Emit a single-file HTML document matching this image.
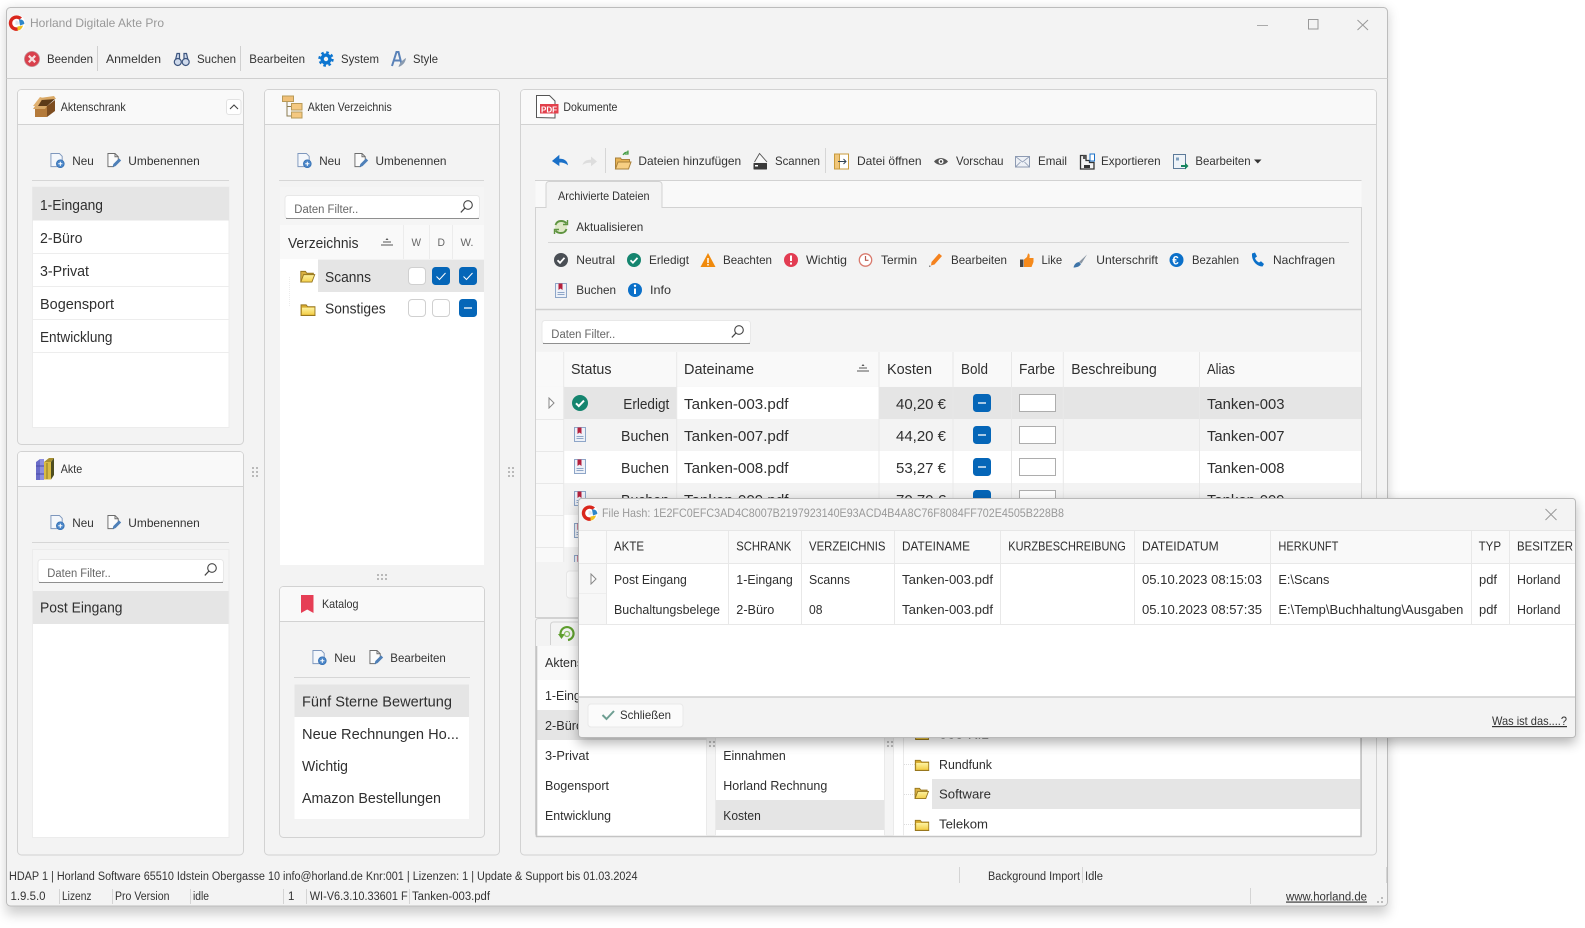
<!DOCTYPE html>
<html lang="de"><head><meta charset="utf-8"><title>Horland Digitale Akte Pro</title>
<style>
html,body{margin:0;padding:0;background:#fff;width:1585px;height:928px;overflow:hidden}
svg{display:block}
text{font-family:"Liberation Sans",sans-serif;font-size:12px;fill:#333;white-space:pre}
.b{font-size:15px;fill:#2f2f2f}
.m{font-size:12.5px;fill:#2f2f2f}
.g{fill:#999}
.f{fill:#666;font-size:11.5px}
.s{font-size:11.5px;fill:#333}
.l{fill:#e5e5e5}
.h{fill:#f9f9f9}
</style></head><body>
<svg xmlns="http://www.w3.org/2000/svg" width="1585" height="928" viewBox="0 0 1585 928" shape-rendering="geometricPrecision">
<defs>
<filter id="sh" x="-5%" y="-5%" width="110%" height="115%"><feGaussianBlur stdDeviation="6"/></filter>
<linearGradient id="fy" x1="0" y1="0" x2="0" y2="1"><stop offset="0" stop-color="#fdf2a0"/><stop offset="1" stop-color="#f3cf4a"/></linearGradient>
<symbol id="new" viewBox="0 0 16 16" overflow="visible"><path d="M1 .5h9l3 3v6H10v5H1z" fill="#f4f7fb" stroke="#7e97bd"/><circle cx="11" cy="11.500" r="4.200" fill="#4b86c8" stroke="#2b68ad" stroke-width=".7"/><path d="M8.800 11.500h4.400M11 9.300v4.400" stroke="#fff" stroke-width="1.100"/></symbol>
<symbol id="ren" viewBox="0 0 16 16" overflow="visible"><path d="M1 .5h7.500l3.500 3.500v4L7 14.500H1z" fill="#fbfbfb" stroke="#6c6c6c"/><path d="M8.500.5v3.500H12" fill="none" stroke="#6c6c6c"/><path d="M5.800 15l1-3.300 6-6 2.300 2.300-6 6z" fill="#4f80b8"/></symbol>
<symbol id="ce" viewBox="0 0 18 18"><rect x=".5" y=".5" width="17" height="17" rx="3.500" fill="#fff" stroke="#d0d0d0"/></symbol>
<symbol id="cd" viewBox="0 0 18 18"><rect width="18" height="18" rx="3.500" fill="#0566b8"/><path d="M4.500 9.500l3 3 6-6.500" fill="none" stroke="#fff" stroke-width="1"/></symbol>
<symbol id="cm" viewBox="0 0 18 18"><rect width="18" height="18" rx="3.500" fill="#0566b8"/><path d="M5 9h8" stroke="#fff" stroke-width="1.300"/></symbol>
<symbol id="fo" viewBox="0 0 16 14"><path d="M.5 13.500V2h5.500l1.500 2h8v9.500z" fill="#d8ab2e" stroke="#96761e"/><path d="M1.500 5h13.500v7.500H1.500z" fill="url(#fy)"/><path d="M.5 13.500h15.500" stroke="#96761e"/></symbol>
<symbol id="fp" viewBox="0 0 16 14"><path d="M.5 13V1.500h5l1.500 2h7v2" fill="#d9b040" stroke="#96761e"/><path d="M.5 13l3-8h12l-3 8z" fill="url(#fy)" stroke="#96761e"/></symbol>
<symbol id="bk" viewBox="0 0 12 15"><rect x=".5" y=".5" width="11" height="14" fill="#edf1f8" stroke="#8ea6c8"/><path d="M3.500.5h4v6.500l-2-1.500-2 1.500z" fill="#b5203c"/><path d="M2.500 9.500h7M2.500 11.500h7" stroke="#8ea6c8"/></symbol>
<symbol id="ok" viewBox="0 0 16 16"><circle cx="8" cy="8" r="8" fill="#15856f"/><path d="M4 8.300l2.800 2.800 5.200-5.500" fill="none" stroke="#fff" stroke-width="2"/></symbol>
<symbol id="sr" viewBox="0 0 13 13"><circle cx="8" cy="5" r="4.300" fill="none" stroke="#444" stroke-width="1.100"/><path d="M4.800 8.200L.8 12.400" stroke="#444" stroke-width="1.200"/></symbol>
<symbol id="so" viewBox="0 0 12 9"><path d="M4.500 3L6 1l1.500 2z" fill="#555"/><path d="M2 5h8M0 8h12" stroke="#555"/></symbol>
<symbol id="ar" viewBox="0 0 7 12"><path d="M1 1l5 5-5 5z" fill="#fff" stroke="#888"/></symbol>
<symbol id="logo" viewBox="0 0 16 16" overflow="visible"><circle cx="8.500" cy="8" r="8" fill="#fff"/><path d="M13.500 2.500A7.800 7.800 0 1 0 9.500 15.800L8.800 12.300A4.300 4.300 0 1 1 10.800 4.800z" fill="#d9261c"/><path d="M7 5.500c3 0 4 2 3 4L7 10z" fill="#dfe7ef"/><path d="M10.500 4.500c3-.5 5.500 1.500 5.300 4.500l-4.300 1.500z" fill="#2d86c9"/><path d="M9 11.500l5.500-1c-.5 2.500-2.700 5-5.500 5z" fill="#f0c220"/></symbol>
</defs>

<rect x="6.500" y="10" width="1381" height="904" fill="#000" opacity=".2" filter="url(#sh)"/>
<rect x="6.500" y="7.500" width="1381" height="898.500" rx="4" fill="#f3f3f3" stroke="#bcbcbc"/>

<!-- title bar -->
<use href="#logo" x="8.500" y="15" width="16" height="16"/>
<text x="30" y="27" class="g" textLength="134" lengthAdjust="spacingAndGlyphs">Horland Digitale Akte Pro</text>
<path d="M1257 25.500h11" stroke="#aaa"/><rect x="1308.500" y="19.500" width="9.500" height="9.500" fill="none" stroke="#999"/><path d="M1357.500 20l10.500 10M1368 20l-10.500 10" stroke="#999"/>

<!-- menu -->
<circle cx="32" cy="59" r="7.600" fill="#d9404c" stroke="#c49a9f" stroke-width=".8"/><path d="M28.800 55.800l6.400 6.400M35.200 55.800l-6.400 6.400" stroke="#f6dede" stroke-width="2.200"/>
<text x="47" y="63" textLength="46" lengthAdjust="spacingAndGlyphs">Beenden</text>
<path d="M97.500 46v25M240.500 46v25" stroke="#d0d0d0"/>
<text x="106" y="63" textLength="55" lengthAdjust="spacingAndGlyphs">Anmelden</text>
<g fill="#cfdaec" stroke="#3e567f" stroke-width="1.200"><path d="M175.500 60l1.500-6.500h2.500v8"/><path d="M188 60l-1.500-6.500H184v8"/><circle cx="177.800" cy="62" r="3.500"/><circle cx="185.700" cy="62" r="3.500"/></g>
<text x="197" y="63" textLength="39" lengthAdjust="spacingAndGlyphs">Suchen</text>
<text x="249.300" y="63" textLength="55.700" lengthAdjust="spacingAndGlyphs">Bearbeiten</text>
<circle cx="326" cy="59" r="6.600" fill="none" stroke="#0c75d0" stroke-width="2.200" stroke-dasharray="2.600 2.590"/><circle cx="326" cy="59" r="3.900" fill="none" stroke="#0c75d0" stroke-width="3.400"/>
<text x="341" y="63" textLength="38" lengthAdjust="spacingAndGlyphs">System</text>
<path d="M392 66l4.500-14h2l3 12M394 60.500h6" fill="none" stroke="#5a82b8" stroke-width="2"/><path d="M398.500 67c1-4 4-7 7.500-9-.5 4-3 7.500-7.500 9z" fill="#8a9bb0"/>
<text x="413" y="63" textLength="25" lengthAdjust="spacingAndGlyphs">Style</text>
<path d="M6.500 78.500h1381" stroke="#cfcfcf"/>

<!-- Aktenschrank panel -->
<rect x="17.500" y="89.500" width="226" height="355" rx="4" fill="#f3f3f3" stroke="#d2d2d2"/>
<path d="M18 124V93a3 3 0 0 1 3-3h219a3 3 0 0 1 3 3v31z" class="h"/><path d="M17.500 124.500h226" stroke="#d2d2d2"/>
<path d="M35 106l6-7h14l-8 7z" fill="#5c3a18"/><path d="M35 106h12v11H35z" fill="#b47a3a"/><path d="M47 106l8-6v11l-8 6z" fill="#7d4d20"/><path d="M33 106l7-9 3 1-5 8z" fill="#e0b070"/><path d="M40 98l14-2 2 3-14 1z" fill="#d9a865"/><path d="M35 106h12l-2 3H33z" fill="#d8a868"/>
<text x="60.700" y="111" textLength="65" lengthAdjust="spacingAndGlyphs">Aktenschrank</text>
<rect x="226.500" y="99.500" width="14.500" height="15" rx="2.500" fill="#fff" stroke="#e2e2e2"/><path d="M230 109l4-4 4 4" fill="none" stroke="#444" stroke-width="1.100"/>
<use href="#new" x="50" y="153" width="15" height="15"/><text x="72.300" y="165" textLength="21.500" lengthAdjust="spacingAndGlyphs">Neu</text>
<use href="#ren" x="107" y="153" width="15" height="15"/><text x="128.300" y="165" textLength="71.500" lengthAdjust="spacingAndGlyphs">Umbenennen</text>
<path d="M32 180.500h197" stroke="#d6d6d6"/>
<rect x="32.500" y="187" width="196.500" height="240.500" fill="#fff" stroke="#ececec"/>
<rect x="32.500" y="187" width="196.500" height="33.500" class="l"/>
<path d="M33 253.500h196M33 286.500h196M33 319.500h196M33 352.500h196" stroke="#ededed"/>
<text class="b" x="40" y="210" textLength="63" lengthAdjust="spacingAndGlyphs">1-Eingang</text>
<text class="b" x="40" y="243" textLength="42.500" lengthAdjust="spacingAndGlyphs">2-Büro</text>
<text class="b" x="40" y="276" textLength="49" lengthAdjust="spacingAndGlyphs">3-Privat</text>
<text class="b" x="40" y="309" textLength="74" lengthAdjust="spacingAndGlyphs">Bogensport</text>
<text class="b" x="40" y="342" textLength="72.500" lengthAdjust="spacingAndGlyphs">Entwicklung</text>

<!-- Akte panel -->
<rect x="17.500" y="451.500" width="226" height="403.500" rx="4" fill="#f3f3f3" stroke="#d2d2d2"/>
<path d="M18 486V455a3 3 0 0 1 3-3h219a3 3 0 0 1 3 3v31z" class="h"/><path d="M17.500 486.500h226" stroke="#d2d2d2"/>
<path d="M36 462l4-3v21h-4z" fill="#6a6cc8"/><path d="M40 459h4v21h-4z" fill="#8d8fe0"/><path d="M44 462h7v17.500h-7z" fill="#d8bb44"/><path d="M44 462l5-4h5l-3 4z" fill="#a68f2f"/><path d="M51 462l3-4v17l-3 4.500z" fill="#4d4d20"/><path d="M36 466h8M36 474h8" stroke="#4a4aa8"/><path d="M47 463v16" stroke="#8d7a22"/>
<text x="60.700" y="473" textLength="21.500" lengthAdjust="spacingAndGlyphs">Akte</text>
<use href="#new" x="50" y="515" width="15" height="15"/><text x="72.300" y="527" textLength="21.500" lengthAdjust="spacingAndGlyphs">Neu</text>
<use href="#ren" x="107" y="515" width="15" height="15"/><text x="128.300" y="527" textLength="71.500" lengthAdjust="spacingAndGlyphs">Umbenennen</text>
<path d="M32 542.500h197" stroke="#d6d6d6"/>
<rect x="32.500" y="549.500" width="196.500" height="288" fill="#f5f5f5" stroke="#ececec"/>
<rect x="33" y="591" width="195.500" height="246" fill="#fff"/><rect x="33" y="591" width="195.500" height="33" class="l"/>
<rect x="38" y="559.500" width="185.500" height="23" rx="3" fill="#fff" stroke="#e8e8e8"/><path d="M39 582.500h184" stroke="#8f8f8f"/>
<text class="f" x="47.300" y="577" textLength="63.500" lengthAdjust="spacingAndGlyphs">Daten Filter..</text>
<use href="#sr" x="204" y="563" width="13" height="13"/>
<text class="b" x="40" y="612.700" textLength="82.500" lengthAdjust="spacingAndGlyphs">Post Eingang</text>

<!-- Akten Verzeichnis panel -->
<rect x="264.500" y="89.500" width="235" height="765.500" rx="4" fill="#f3f3f3" stroke="#d2d2d2"/>
<path d="M265 124V93a3 3 0 0 1 3-3h228a3 3 0 0 1 3 3v31z" class="h"/><path d="M264.500 124.500h235" stroke="#d2d2d2"/>
<path d="M287 101v15h4M287 106.500h4" fill="none" stroke="#8a7a50"/><rect x="282.500" y="96" width="11" height="5.500" fill="#f0c078" stroke="#b89a58"/><rect x="291.500" y="103.500" width="10.500" height="6.500" fill="#f4c880" stroke="#b89a58"/><rect x="291.500" y="112" width="10.500" height="6" fill="#f4c880" stroke="#b89a58"/>
<text x="307.800" y="111" textLength="84" lengthAdjust="spacingAndGlyphs">Akten Verzeichnis</text>
<use href="#new" x="297" y="153" width="15" height="15"/><text x="319.200" y="165" textLength="21.500" lengthAdjust="spacingAndGlyphs">Neu</text>
<use href="#ren" x="354" y="153" width="15" height="15"/><text x="375.500" y="165" textLength="71" lengthAdjust="spacingAndGlyphs">Umbenennen</text>
<path d="M279 180.500h205" stroke="#d6d6d6"/>
<rect x="280" y="187" width="204" height="38" fill="#f5f5f5"/>
<rect x="285" y="195.500" width="194.500" height="23" rx="3" fill="#fff" stroke="#e8e8e8"/><path d="M286 218.500h193" stroke="#8f8f8f"/>
<text class="f" x="294.300" y="213" textLength="64" lengthAdjust="spacingAndGlyphs">Daten Filter..</text>
<use href="#sr" x="460" y="200" width="13" height="13"/>
<rect x="280" y="225" width="204" height="34" class="h"/>
<rect x="280" y="259" width="204" height="306" fill="#fff"/>
<path d="M403.500 225v34M429.500 225v34M452.500 225v34" stroke="#ececec"/>
<text class="b" x="288" y="248" textLength="70.500" lengthAdjust="spacingAndGlyphs">Verzeichnis</text>
<use href="#so" x="381" y="237" width="12" height="9"/>
<text x="411.500" y="246" textLength="9.500" lengthAdjust="spacingAndGlyphs" style="font-size:11px;fill:#666">W</text>
<text x="437.500" y="246" textLength="7.500" lengthAdjust="spacingAndGlyphs" style="font-size:11px;fill:#666">D</text>
<text x="460.500" y="246" textLength="13" lengthAdjust="spacingAndGlyphs" style="font-size:11px;fill:#666">W.</text>
<rect x="318" y="259.500" width="166" height="32.500" class="l"/>
<path d="M289.500 277v30" stroke="#ececec" stroke-dasharray="1 1"/>
<use href="#fp" x="300" y="270" width="15.500" height="13"/>
<use href="#fo" x="300.500" y="303" width="15" height="13"/>
<text class="b" x="325" y="282" textLength="46" lengthAdjust="spacingAndGlyphs">Scanns</text>
<text class="b" x="325" y="313.500" textLength="60.700" lengthAdjust="spacingAndGlyphs">Sonstiges</text>
<use href="#ce" x="408" y="267" width="18" height="18"/><use href="#cd" x="432" y="267" width="18" height="18"/><use href="#cd" x="459" y="267" width="18" height="18"/>
<use href="#ce" x="408" y="299" width="18" height="18"/><use href="#ce" x="432" y="299" width="18" height="18"/><use href="#cm" x="459" y="299" width="18" height="18"/>
<g fill="#b9b9b9"><rect x="377" y="574" width="2" height="2"/><rect x="381" y="574" width="2" height="2"/><rect x="385" y="574" width="2" height="2"/><rect x="377" y="578" width="2" height="2"/><rect x="381" y="578" width="2" height="2"/><rect x="385" y="578" width="2" height="2"/>
<rect x="252" y="467" width="2" height="2"/><rect x="256" y="467" width="2" height="2"/><rect x="252" y="471" width="2" height="2"/><rect x="256" y="471" width="2" height="2"/><rect x="252" y="475" width="2" height="2"/><rect x="256" y="475" width="2" height="2"/>
<rect x="508" y="467" width="2" height="2"/><rect x="512" y="467" width="2" height="2"/><rect x="508" y="471" width="2" height="2"/><rect x="512" y="471" width="2" height="2"/><rect x="508" y="475" width="2" height="2"/><rect x="512" y="475" width="2" height="2"/></g>

<!-- Katalog panel -->
<rect x="279.500" y="586.500" width="205" height="251" rx="4" fill="#f3f3f3" stroke="#d2d2d2"/>
<path d="M280 621V590a3 3 0 0 1 3-3h198a3 3 0 0 1 3 3v31z" class="h"/><path d="M279.500 621.500h205" stroke="#d2d2d2"/>
<path d="M301 595h12.500v18l-6.250-3.500-6.250 3.500z" fill="#e63e55"/>
<text x="322" y="608" textLength="36.500" lengthAdjust="spacingAndGlyphs">Katalog</text>
<use href="#new" x="312" y="650" width="15" height="15"/><text x="334.200" y="662" textLength="21.500" lengthAdjust="spacingAndGlyphs">Neu</text>
<use href="#ren" x="369" y="650" width="15" height="15"/><text x="390.300" y="662" textLength="55.500" lengthAdjust="spacingAndGlyphs">Bearbeiten</text>
<path d="M294 677.500h176" stroke="#d6d6d6"/>
<rect x="294.500" y="684.500" width="174.500" height="134.500" fill="#fff"/><rect x="294.500" y="684.500" width="174.500" height="32.500" class="l"/>
<text class="b" x="302" y="706.700" textLength="150" lengthAdjust="spacingAndGlyphs">Fünf Sterne Bewertung</text>
<text class="b" x="302" y="739" textLength="157" lengthAdjust="spacingAndGlyphs">Neue Rechnungen Ho...</text>
<text class="b" x="302" y="771" textLength="46" lengthAdjust="spacingAndGlyphs">Wichtig</text>
<text class="b" x="302" y="803" textLength="139" lengthAdjust="spacingAndGlyphs">Amazon Bestellungen</text>

<!-- Dokumente panel -->
<rect x="520.500" y="89.500" width="856" height="765.500" rx="4" fill="#f3f3f3" stroke="#d2d2d2"/>
<path d="M521 124V93a3 3 0 0 1 3-3h849a3 3 0 0 1 3 3v31z" class="h"/><path d="M520.500 124.500h856" stroke="#d2d2d2"/>
<path d="M536.500 117.500v-22h13l5.500 5.500v17z" fill="#fff" stroke="#555"/><rect x="540" y="104" width="18.500" height="9.500" fill="#e2404c"/><text x="541" y="112.300" style="font-size:8px;font-weight:bold;fill:#fff" textLength="16" lengthAdjust="spacingAndGlyphs">PDF</text>
<text x="563.400" y="111" textLength="54" lengthAdjust="spacingAndGlyphs">Dokumente</text>
<!-- doc toolbar -->
<path d="M552.500 161l6.500-5.500v3.500c4 0 7.500 1 8.500 5.500-2.500-2-5-2.500-8.500-2.500v3.500z" fill="#1a70c8" stroke="#1a70c8" stroke-width=".7"/>
<path d="M597 161.500l-6-5v3.200c-4 0-7.500 1-8.500 5.300 2.500-2 5-2.300 8.500-2.300v3.600z" fill="#ddd"/>
<path d="M605.500 148v25M825.500 148v25" stroke="#d6d6d6"/>
<path d="M615.500 169v-11h5l1 1.500h8v3" fill="#e8b455" stroke="#a9803a"/><path d="M615.500 169l2.500-7h13l-2.500 7z" fill="#f7cf83" stroke="#a9803a"/><path d="M623 155c1-2 3-3 5-3m0-1.500v3.500h-3.500" fill="none" stroke="#3f9a3f" stroke-width="1.200"/>
<text x="638.400" y="165" textLength="102.800" lengthAdjust="spacingAndGlyphs">Dateien hinzufügen</text>
<path d="M754.500 162l5-8.500 7.500 8.500" fill="#f8f8f8" stroke="#555" stroke-width=".9"/><rect x="753.500" y="163" width="13.500" height="6.500" rx=".5" fill="#3a3a3a"/><rect x="755" y="165" width="3" height="1.500" fill="#fff"/>
<text x="775" y="165" textLength="45" lengthAdjust="spacingAndGlyphs">Scannen</text>
<rect x="834.500" y="154" width="14" height="15" fill="#fff" stroke="#c89b3c"/><rect x="834.500" y="154" width="5" height="15" fill="#f0c67a" stroke="#c89b3c"/><path d="M838 161.500h8m-2.500-2.500l2.500 2.500-2.500 2.500" fill="none" stroke="#345" />
<text x="857" y="165" textLength="64.600" lengthAdjust="spacingAndGlyphs">Datei öffnen</text>
<path d="M934 161.500c3.500-4.500 10.500-4.500 14 0-3.500 4.500-10.500 4.500-14 0z" fill="#555"/><circle cx="941" cy="161.500" r="2.500" fill="#fff"/><circle cx="941" cy="161.500" r="1.200" fill="#444"/>
<text x="956" y="165" textLength="47.500" lengthAdjust="spacingAndGlyphs">Vorschau</text>
<rect x="1015.500" y="156.500" width="14" height="10.500" fill="#eef1f6" stroke="#8d9ab2"/><path d="M1015.500 156.500l7 5.500 7-5.500M1015.500 167l5-5M1029.500 167l-5-5" fill="none" stroke="#8d9ab2" stroke-width=".8"/>
<text x="1038" y="165" textLength="29" lengthAdjust="spacingAndGlyphs">Email</text>
<path d="M1080.500 155.500h5.500v5h3.500v2h4.500v6.500h-13.500z" fill="#f3f3f3" stroke="#333" stroke-width="1.300"/><rect x="1083" y="155.500" width="3" height="3.500" fill="#555"/><rect x="1090" y="154" width="4.500" height="7" fill="#fff" stroke="#1a70c8"/><rect x="1084" y="165" width="6" height="3" fill="#333"/>
<text x="1101" y="165" textLength="59.600" lengthAdjust="spacingAndGlyphs">Exportieren</text>
<rect x="1173.500" y="154.500" width="12" height="14" fill="#eef3f8" stroke="#5c7a99"/><path d="M1176 157.500h3v3h-3z" fill="#7e9fbe"/><path d="M1181 165h4v-2.500l3.500 3.500-3.500 3.500V167h-4z" fill="#16855f"/>
<text x="1195.400" y="165" textLength="55.200" lengthAdjust="spacingAndGlyphs">Bearbeiten</text>
<path d="M1254 159.500h7.500l-3.700 4z" fill="#333"/>
<path d="M535 180.500h826.500" stroke="#d2d2d2"/>

<!-- tab -->
<rect x="535.500" y="181" width="826" height="27" class="h"/>
<path d="M546 207.500V184.500a3 3 0 0 1 3-3h110a3 3 0 0 1 3 3v23" fill="#f3f3f3" stroke="#d2d2d2"/>
<rect x="535.500" y="207.500" width="826" height="410" fill="#f3f3f3" stroke="#d2d2d2"/>
<rect x="546.500" y="206" width="115" height="3" fill="#f3f3f3"/>
<text x="558" y="200" textLength="91.500" lengthAdjust="spacingAndGlyphs">Archivierte Dateien</text>
<circle cx="561" cy="227" r="6" fill="#dfe8c8"/><path d="M555.500 225c1-3 3-4 5.500-4 2.500 0 4.500 1 5.500 2.500M566.500 229c-1 3-3 4-5.500 4-2.500 0-4.500-1-5.500-2.500" fill="none" stroke="#5f9440" stroke-width="1.900"/><path d="M567.500 220v4.500H563M554.500 234v-4.500h4.500" fill="none" stroke="#5f9440" stroke-width="1.400"/>
<text x="576.300" y="231" textLength="67" lengthAdjust="spacingAndGlyphs">Aktualisieren</text>
<path d="M548 242.500h801" stroke="#d6d6d6"/>
<!-- status row -->
<circle cx="561" cy="260" r="7" fill="#4a4f55"/><path d="M557.500 260.300l2.500 2.500 4.500-5" fill="none" stroke="#fff" stroke-width="1.800"/>
<text x="576.300" y="264" textLength="38.700" lengthAdjust="spacingAndGlyphs">Neutral</text>
<use href="#ok" x="627" y="253" width="14" height="14"/>
<text x="649" y="264" textLength="40" lengthAdjust="spacingAndGlyphs">Erledigt</text>
<path d="M708 253l7.500 14h-15z" fill="#f08a0c"/><path d="M708 258v5M708 264v1.500" stroke="#fff" stroke-width="1.500"/>
<text x="723" y="264" textLength="49" lengthAdjust="spacingAndGlyphs">Beachten</text>
<circle cx="791" cy="260" r="7" fill="#e23c52"/><path d="M791 255.500v5.500M791 262.500v2" stroke="#fff" stroke-width="2"/>
<text x="806" y="264" textLength="41" lengthAdjust="spacingAndGlyphs">Wichtig</text>
<circle cx="865.500" cy="260" r="6.200" fill="#fff" stroke="#d9796c" stroke-width="1.300"/><path d="M865.500 256v4.300h3" fill="none" stroke="#b85c50" stroke-width="1.200"/>
<text x="881" y="264" textLength="36" lengthAdjust="spacingAndGlyphs">Termin</text>
<path d="M931.500 262l7.500-8.500 3 2.500-7.500 8.500-3.500 1z" fill="#f4821e"/><rect x="929" y="265.500" width="1.500" height="1.500" fill="#888"/>
<text x="951" y="264" textLength="56" lengthAdjust="spacingAndGlyphs">Bearbeiten</text>
<rect x="1020" y="259.500" width="3.500" height="7.500" fill="#444"/><path d="M1024 259.500l3-2.500 1-3.500c1.500 0 2 1.500 1.500 4.500h4v4l-2 5h-7.500z" fill="#f58a1c"/>
<text x="1041.500" y="264" textLength="20.700" lengthAdjust="spacingAndGlyphs">Like</text>
<path d="M1073.500 267.500c1-4 3-5 5.500-5.500l2 2c-1.500 2.500-4 3.500-7.500 3.500z" fill="#3e74a8"/><path d="M1079 262l8-7.500-5.500 9z" fill="#8a96a3"/>
<text x="1096.300" y="264" textLength="61.700" lengthAdjust="spacingAndGlyphs">Unterschrift</text>
<circle cx="1176.500" cy="260" r="7" fill="#0b70c9"/><text x="1172.300" y="264.300" style="font-size:11.500px;font-weight:bold;fill:#fff">€</text>
<text x="1192" y="264" textLength="47" lengthAdjust="spacingAndGlyphs">Bezahlen</text>
<path d="M1252 253.500l3-1 2 4-2 1.500c.5 2 2 3.500 4 4.500l2-1.300 3 2.800-1.500 2.500c-6 0-11-6-10.500-12.500z" fill="#0b70c9"/>
<text x="1273" y="264" textLength="62" lengthAdjust="spacingAndGlyphs">Nachfragen</text>
<use href="#bk" x="555" y="283" width="12" height="15"/>
<text x="576.300" y="294" textLength="39.700" lengthAdjust="spacingAndGlyphs">Buchen</text>
<circle cx="635" cy="290" r="7" fill="#0b70c9"/><path d="M635 288.500v5.500" stroke="#fff" stroke-width="2"/><circle cx="635" cy="285.800" r="1.200" fill="#fff"/>
<text x="650" y="294" textLength="21" lengthAdjust="spacingAndGlyphs">Info</text>
<path d="M535.500 309.500h826" stroke="#cfcfcf" stroke-width="1.500"/>
<rect x="542" y="320.500" width="208.500" height="23" rx="3" fill="#fff" stroke="#e8e8e8"/><path d="M543 343.500h207" stroke="#8f8f8f"/>
<text class="f" x="551.300" y="338" textLength="64" lengthAdjust="spacingAndGlyphs">Daten Filter..</text>
<use href="#sr" x="731" y="325" width="13" height="13"/>
<!-- grid -->
<rect x="536" y="351.700" width="825" height="35" class="h"/>
<rect x="536" y="387" width="28" height="175" class="h"/>
<rect x="564" y="387" width="797" height="175" fill="#fff"/>
<rect x="564" y="387" width="797" height="32" class="l"/><rect x="677" y="387" width="202" height="32" fill="#fff"/>
<rect x="564" y="419" width="797" height="32" fill="#f3f3f3"/><rect x="564" y="483" width="797" height="32" fill="#f3f3f3"/><rect x="564" y="547" width="797" height="15" fill="#f3f3f3"/>
<path d="M563.700 352v210M676.700 352v210M879 352v210M953 352v210M1011.500 352v210M1063.300 352v210M1199.500 352v210" stroke="#e8e8e8"/>
<path d="M536 419.500h28M536 451.500h28M536 483.500h28M536 515.500h28M536 547.500h28" stroke="#e8e8e8"/>
<text class="b" x="571" y="374" textLength="40.500" lengthAdjust="spacingAndGlyphs">Status</text>
<text class="b" x="684" y="374" textLength="70" lengthAdjust="spacingAndGlyphs">Dateiname</text>
<use href="#so" x="857" y="363" width="12" height="9"/>
<text class="b" x="887" y="374" textLength="45" lengthAdjust="spacingAndGlyphs">Kosten</text>
<text class="b" x="961" y="374" textLength="27" lengthAdjust="spacingAndGlyphs">Bold</text>
<text class="b" x="1019" y="374" textLength="36" lengthAdjust="spacingAndGlyphs">Farbe</text>
<text class="b" x="1071.300" y="374" textLength="85.500" lengthAdjust="spacingAndGlyphs">Beschreibung</text>
<text class="b" x="1207" y="374" textLength="28" lengthAdjust="spacingAndGlyphs">Alias</text>
<use href="#ar" x="548" y="397" width="7" height="12"/>
<use href="#ok" x="572" y="395" width="16" height="16"/>
<use href="#bk" x="574" y="427" width="12" height="15"/><use href="#bk" x="574" y="459" width="12" height="15"/><use href="#bk" x="574" y="491" width="12" height="15"/><use href="#bk" x="574" y="523" width="12" height="15"/><use href="#bk" x="574" y="555" width="12" height="15"/>
<rect x="564" y="562" width="30" height="10" fill="#f3f3f3"/>
<text class="b" x="623.300" y="409" textLength="46" lengthAdjust="spacingAndGlyphs">Erledigt</text>
<text class="b" x="684" y="409" textLength="104.500" lengthAdjust="spacingAndGlyphs">Tanken-003.pdf</text>
<text class="b" x="896" y="409" textLength="50" lengthAdjust="spacingAndGlyphs">40,20 €</text>
<text class="b" x="1207" y="409" textLength="77.500" lengthAdjust="spacingAndGlyphs">Tanken-003</text>
<text class="b" x="621" y="441" textLength="48" lengthAdjust="spacingAndGlyphs">Buchen</text>
<text class="b" x="684" y="441" textLength="104.500" lengthAdjust="spacingAndGlyphs">Tanken-007.pdf</text>
<text class="b" x="896" y="441" textLength="50" lengthAdjust="spacingAndGlyphs">44,20 €</text>
<text class="b" x="1207" y="441" textLength="77.500" lengthAdjust="spacingAndGlyphs">Tanken-007</text>
<text class="b" x="621" y="473" textLength="48" lengthAdjust="spacingAndGlyphs">Buchen</text>
<text class="b" x="684" y="473" textLength="104.500" lengthAdjust="spacingAndGlyphs">Tanken-008.pdf</text>
<text class="b" x="896" y="473" textLength="50" lengthAdjust="spacingAndGlyphs">53,27 €</text>
<text class="b" x="1207" y="473" textLength="77.500" lengthAdjust="spacingAndGlyphs">Tanken-008</text>
<text class="b" x="621" y="505" textLength="48" lengthAdjust="spacingAndGlyphs">Buchen</text>
<text class="b" x="684" y="505" textLength="104.500" lengthAdjust="spacingAndGlyphs">Tanken-009.pdf</text>
<text class="b" x="896" y="505" textLength="50" lengthAdjust="spacingAndGlyphs">70,70 €</text>
<text class="b" x="1207" y="505" textLength="77.500" lengthAdjust="spacingAndGlyphs">Tanken-009</text>
<use href="#cm" x="973" y="394" width="18" height="18"/><use href="#cm" x="973" y="426" width="18" height="18"/><use href="#cm" x="973" y="458" width="18" height="18"/><use href="#cm" x="973" y="490" width="18" height="18"/>
<g fill="#fff" stroke="#adadad"><rect x="1019.500" y="394.500" width="36" height="17"/><rect x="1019.500" y="426.500" width="36" height="17"/><rect x="1019.500" y="458.500" width="36" height="17"/><rect x="1019.500" y="490.500" width="36" height="17"/></g>
<rect x="566.500" y="571" width="40" height="27" rx="3" fill="#f9f9f9" stroke="#e6e6e6"/>

<!-- bottom tab section -->
<rect x="535.500" y="618.500" width="826" height="218" rx="3" fill="#f3f3f3" stroke="#d2d2d2"/>
<path d="M550.500 645v-20a3 3 0 0 1 3-3h40v23" fill="#f3f3f3" stroke="#d2d2d2"/>
<path d="M561 636a6.500 6.500 0 1 1 7 4" fill="none" stroke="#5e9e2e" stroke-width="2.200"/><path d="M558 634h7l-3.500 5z" fill="#5e9e2e"/><circle cx="567" cy="634" r="2.500" fill="none" stroke="#8dc063" stroke-width="1.300"/>
<rect x="537" y="646" width="169" height="34" class="h"/>
<rect x="537" y="680" width="169" height="156" fill="#fff"/>
<rect x="537" y="710" width="169" height="30" class="l"/>
<rect x="706" y="646" width="10" height="190" fill="#f5f5f5"/>
<rect x="716" y="646" width="168" height="190" fill="#fff"/>
<rect x="716" y="800" width="168" height="30" class="l"/>
<rect x="884" y="646" width="10" height="190" fill="#f5f5f5"/>
<rect x="894" y="646" width="467" height="190" fill="#fff"/>
<rect x="932" y="779" width="428" height="30" class="l"/>
<path d="M536.500 646v191M1361 646v191M536 836.500h825.500" stroke="#c4c4c4" stroke-width="1.600"/>
<path d="M706.500 646v190M715.500 646v190M884.500 646v190M893.500 646v190M903.500 646v190" stroke="#eaeaea"/>
<g fill="#bbb"><rect x="709" y="741" width="2" height="2"/><rect x="713" y="741" width="2" height="2"/><rect x="709" y="745" width="2" height="2"/><rect x="713" y="745" width="2" height="2"/><rect x="887" y="741" width="2" height="2"/><rect x="891" y="741" width="2" height="2"/><rect x="887" y="745" width="2" height="2"/><rect x="891" y="745" width="2" height="2"/></g>
<text class="m" x="545" y="667">Aktenschrank</text>
<text class="m" x="545" y="700" textLength="56.500" lengthAdjust="spacingAndGlyphs">1-Eingang</text>
<text class="m" x="545" y="730" textLength="38" lengthAdjust="spacingAndGlyphs">2-Büro</text>
<text class="m" x="545" y="760" textLength="44" lengthAdjust="spacingAndGlyphs">3-Privat</text>
<text class="m" x="545" y="790" textLength="64" lengthAdjust="spacingAndGlyphs">Bogensport</text>
<text class="m" x="545" y="820" textLength="66" lengthAdjust="spacingAndGlyphs">Entwicklung</text>
<text class="m" x="723.300" y="760" textLength="62.500" lengthAdjust="spacingAndGlyphs">Einnahmen</text>
<text class="m" x="723.300" y="790" textLength="104" lengthAdjust="spacingAndGlyphs">Horland Rechnung</text>
<text class="m" x="723.300" y="820" textLength="37.500" lengthAdjust="spacingAndGlyphs">Kosten</text>
<path d="M904 764.500h11M904 794.500h11M904 824.500h11" stroke="#ddd" stroke-dasharray="1 1"/>
<use href="#fo" x="914.500" y="728" width="15" height="12"/>
<use href="#fo" x="914.500" y="758.500" width="15" height="12.500"/>
<use href="#fp" x="914" y="787" width="15.500" height="12.500"/>
<use href="#fo" x="914.500" y="818.500" width="15" height="12.500"/>
<text class="m" x="939" y="738.500" textLength="50" lengthAdjust="spacingAndGlyphs">005 Kfz</text>
<text class="m" x="939" y="769" textLength="53" lengthAdjust="spacingAndGlyphs">Rundfunk</text>
<text class="m" x="939" y="798.600" textLength="52" lengthAdjust="spacingAndGlyphs">Software</text>
<text class="m" x="939" y="828.600" textLength="49" lengthAdjust="spacingAndGlyphs">Telekom</text>

<!-- status bar -->
<text class="s" x="9" y="880" textLength="628.500" lengthAdjust="spacingAndGlyphs">HDAP 1 | Horland Software 65510 Idstein Obergasse 10 info@horland.de Knr:001 | Lizenzen: 1 | Update &amp; Support bis 01.03.2024</text>
<path d="M959.500 867v16M1082.500 867v16M1386.500 867v16M59.500 889v15M112.500 889v15M190.500 889v15M283.500 889v15M306.500 889v15M409.500 889v15M1250.500 888v16" stroke="#d4d4d4"/>
<text class="s" x="988" y="880" textLength="92" lengthAdjust="spacingAndGlyphs">Background Import</text>
<text class="s" x="1085" y="880" textLength="18" lengthAdjust="spacingAndGlyphs">Idle</text>
<text class="s" x="10.500" y="900" textLength="35" lengthAdjust="spacingAndGlyphs">1.9.5.0</text>
<text class="s" x="62" y="900" textLength="29.500" lengthAdjust="spacingAndGlyphs">Lizenz</text>
<text class="s" x="115" y="900" textLength="54.500" lengthAdjust="spacingAndGlyphs">Pro Version</text>
<text class="s" x="193" y="900" textLength="16" lengthAdjust="spacingAndGlyphs">idle</text>
<text class="s" x="288" y="900">1</text>
<text class="s" x="309.700" y="900" textLength="98" lengthAdjust="spacingAndGlyphs">WI-V6.3.10.33601 F</text>
<text class="s" x="412" y="900" textLength="78" lengthAdjust="spacingAndGlyphs">Tanken-003.pdf</text>
<text class="s" x="1286" y="900.500" textLength="81" lengthAdjust="spacingAndGlyphs" style="text-decoration:underline">www.horland.de</text>
<g fill="#bbb"><rect x="1381" y="897" width="2" height="2"/><rect x="1381" y="901" width="2" height="2"/><rect x="1377" y="901" width="2" height="2"/></g>

<!-- dialog -->
<rect x="578.500" y="502" width="997" height="241" fill="#000" opacity=".3" filter="url(#sh)"/>
<rect x="578.500" y="498.500" width="997" height="239" rx="3" fill="#f3f3f3" stroke="#b9b9b9"/>
<use href="#logo" x="581.500" y="505" width="16" height="16"/>
<text x="602" y="517" class="g" textLength="462" lengthAdjust="spacingAndGlyphs">File Hash: 1E2FC0EFC3AD4C8007B2197923140E93ACD4B4A8C76F8084FF702E4505B228B8</text>
<path d="M1545.500 509l11 11M1556.500 509l-11 11" stroke="#999"/>
<rect x="579" y="531" width="996" height="166" fill="#fff"/>
<rect x="579" y="531" width="996" height="32.500" class="h"/>
<rect x="579" y="563" width="27" height="61" fill="#f7f7f7"/>
<path d="M579 530.500h996" stroke="#e6e6e6"/>
<path d="M579 563.500h996M579 624.500h996" stroke="#e8e8e8"/>
<path d="M579 593.500h27" stroke="#eee"/>
<path d="M606.500 531v93M728.500 531v93M801.500 531v93M894.500 531v93M1000.500 531v93M1134.500 531v93M1270.500 531v93M1471.500 531v93M1509.500 531v93" stroke="#e8e8e8"/>
<path d="M579 697h996" stroke="#cfcfcf" stroke-width="1.500"/>
<text class="m" x="614" y="550.700" textLength="30" lengthAdjust="spacingAndGlyphs">AKTE</text>
<text class="m" x="736.300" y="550.700" textLength="55" lengthAdjust="spacingAndGlyphs">SCHRANK</text>
<text class="m" x="809" y="550.700" textLength="76.500" lengthAdjust="spacingAndGlyphs">VERZEICHNIS</text>
<text class="m" x="902" y="550.700" textLength="68" lengthAdjust="spacingAndGlyphs">DATEINAME</text>
<text class="m" x="1008.300" y="550.700" textLength="117.500" lengthAdjust="spacingAndGlyphs">KURZBESCHREIBUNG</text>
<text class="m" x="1142" y="550.700" textLength="76.700" lengthAdjust="spacingAndGlyphs">DATEIDATUM</text>
<text class="m" x="1278.400" y="550.700" textLength="60" lengthAdjust="spacingAndGlyphs">HERKUNFT</text>
<text class="m" x="1478.600" y="550.700" textLength="22.500" lengthAdjust="spacingAndGlyphs">TYP</text>
<text class="m" x="1517" y="550.700" textLength="56" lengthAdjust="spacingAndGlyphs">BESITZER</text>
<use href="#ar" x="590" y="573" width="7" height="12"/>
<text class="m" x="614" y="584" textLength="72.800" lengthAdjust="spacingAndGlyphs">Post Eingang</text>
<text class="m" x="736.300" y="584" textLength="56.500" lengthAdjust="spacingAndGlyphs">1-Eingang</text>
<text class="m" x="809" y="584" textLength="41" lengthAdjust="spacingAndGlyphs">Scanns</text>
<text class="m" x="902" y="584" textLength="91" lengthAdjust="spacingAndGlyphs">Tanken-003.pdf</text>
<text class="m" x="1142" y="584" textLength="120" lengthAdjust="spacingAndGlyphs">05.10.2023 08:15:03</text>
<text class="m" x="1278.400" y="584" textLength="51" lengthAdjust="spacingAndGlyphs">E:\Scans</text>
<text class="m" x="1479" y="584" textLength="18" lengthAdjust="spacingAndGlyphs">pdf</text>
<text class="m" x="1517" y="584" textLength="43.500" lengthAdjust="spacingAndGlyphs">Horland</text>
<text class="m" x="614" y="614" textLength="106" lengthAdjust="spacingAndGlyphs">Buchaltungsbelege</text>
<text class="m" x="736.300" y="614" textLength="38" lengthAdjust="spacingAndGlyphs">2-Büro</text>
<text class="m" x="809" y="614" textLength="13.500" lengthAdjust="spacingAndGlyphs">08</text>
<text class="m" x="902" y="614" textLength="91" lengthAdjust="spacingAndGlyphs">Tanken-003.pdf</text>
<text class="m" x="1142" y="614" textLength="120" lengthAdjust="spacingAndGlyphs">05.10.2023 08:57:35</text>
<text class="m" x="1278.400" y="614" textLength="185" lengthAdjust="spacingAndGlyphs">E:\Temp\Buchhaltung\Ausgaben</text>
<text class="m" x="1479" y="614" textLength="18" lengthAdjust="spacingAndGlyphs">pdf</text>
<text class="m" x="1517" y="614" textLength="43.500" lengthAdjust="spacingAndGlyphs">Horland</text>
<rect x="588" y="704" width="95" height="23" rx="3" fill="#fbfbfb" stroke="#e8e8e8"/>
<path d="M602.500 715l4 4 7.500-8" fill="none" stroke="#6e9e92" stroke-width="2"/>
<text x="620" y="719" textLength="51" lengthAdjust="spacingAndGlyphs">Schließen</text>
<text x="1492" y="725" textLength="75" lengthAdjust="spacingAndGlyphs" style="text-decoration:underline">Was ist das....?</text>
</svg>
</body></html>
